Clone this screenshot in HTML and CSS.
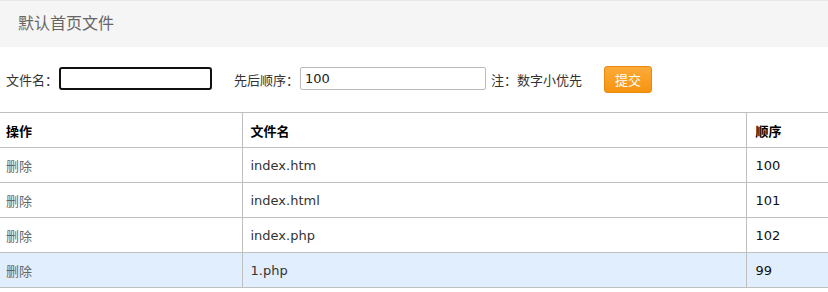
FILE: index.html
```html
<!DOCTYPE html>
<html lang="zh-CN">
<head>
<meta charset="utf-8">
<title>默认首页文件</title>
<link rel="stylesheet" href="styles.css">
</head>
<body>
<div class="panel">
  <div class="panel-head">默认首页文件</div>
  <form class="form-row">
    <label class="lbl">文件名：</label>
    <input class="inp inp-focus" type="text" value="">
    <label class="lbl lbl-gap">先后顺序：</label>
    <input class="inp inp-order" type="text" value="100">
    <span class="note">注：数字小优先</span>
    <button class="btn" type="button">提交</button>
  </form>
  <table class="grid">
    <thead>
      <tr><th class="c1">操作</th><th class="c2">文件名</th><th class="c3">顺序</th></tr>
    </thead>
    <tbody>
      <tr><td class="c1"><a class="del">删除</a></td><td class="c2">index.htm</td><td class="c3">100</td></tr>
      <tr><td class="c1"><a class="del">删除</a></td><td class="c2">index.html</td><td class="c3">101</td></tr>
      <tr><td class="c1"><a class="del">删除</a></td><td class="c2">index.php</td><td class="c3">102</td></tr>
      <tr class="hl"><td class="c1"><a class="del">删除</a></td><td class="c2">1.php</td><td class="c3">99</td></tr>
    </tbody>
  </table>
</div>
</body>
</html>
```
FILE: styles.css
```css
* { box-sizing: border-box; }
html, body { margin: 0; padding: 0; background: #fff; }
body {
  font-family: "DejaVu Sans", "Noto Sans CJK SC", sans-serif;
  font-size: 13px;
  color: #333;
}
.panel-head {
  border-top: 1px solid #e6e6e6;
  background: #f5f5f5;
  height: 47px;
  line-height: 46px;
  padding-left: 18px;
  font-size: 16px;
  color: #666;
}
.form-row {
  display: flex;
  align-items: center;
  height: 65px;
  padding-left: 6px;
  margin: 0;
}
.lbl { color: #333; white-space: nowrap; }
.lbl-gap { margin-left: 22px; }
.inp {
  height: 23px;
  margin: 0 0 0 1px;
  padding: 0 4px;
  font: inherit;
  color: #222;
  background: #fff;
  outline: none;
  position: relative;
  top: -1px;
}
.inp-focus {
  width: 153px;
  border: 2px solid #111;
  border-radius: 3px;
}
.inp-order {
  width: 186px;
  border: 1px solid #bbb;
  border-radius: 2px;
}
.note { margin-left: 5px; color: #333; white-space: nowrap; }
.btn {
  margin-left: 22px;
  width: 48px;
  height: 27px;
  padding: 0;
  border: 1px solid #e8890c;
  border-radius: 3px;
  background: linear-gradient(#fbab3a, #f7940f);
  color: #fff;
  font: inherit;
  font-size: 13px;
}
.grid {
  width: 828px;
  border-collapse: collapse;
  table-layout: fixed;
}
.grid th, .grid td {
  height: 35px;
  border: 1px solid #c0c0c0;
  text-align: left;
  vertical-align: middle;
  padding: 0 0 0 9px;
  font-weight: normal;
}
.grid th { font-weight: bold; color: #000; }
.grid .c1 { width: 242px; border-left: none; padding-left: 6px; }
.grid .c2 { width: 504px; padding-left: 8px; }
.grid .c3 { border-right: none; padding-left: 9px; }
.grid td.c3 { color: #111; }
.grid td.c2 { color: #333; }
.del { color: #666; text-decoration: none; }
.hl td { background: #e1eefd; }
```
